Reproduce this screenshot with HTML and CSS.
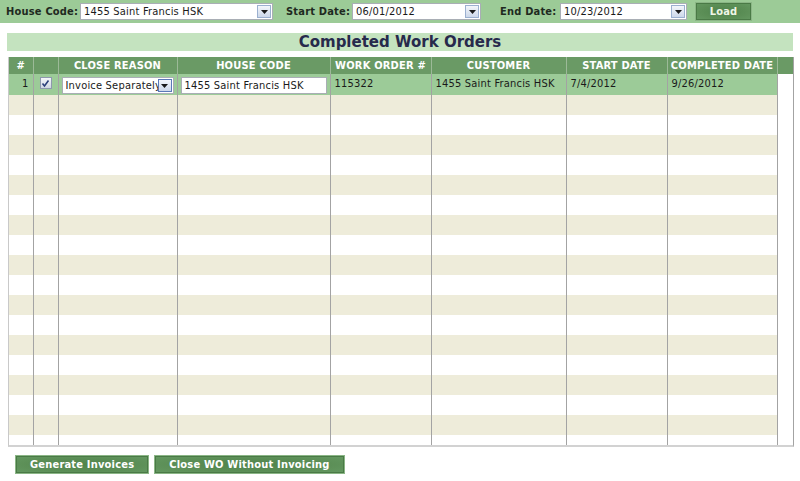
FILE: index.html
```html
<!DOCTYPE html>
<html>
<head>
<meta charset="utf-8">
<link rel="stylesheet" href="styles.css">
</head>
<body>
<div class="toolbar">
  <span class="lbl lbl-house">House Code:</span>
  <div class="combo combo-house"><span class="val">1455 Saint Francis HSK</span><span class="arrow"><svg width="7" height="4" viewBox="0 0 7 4"><path d="M0 0H7L3.5 4Z" fill="#1a1a1a"/></svg></span></div>
  <span class="lbl lbl-start">Start Date:</span>
  <div class="combo combo-date"><span class="val">06/01/2012</span><span class="arrow"><svg width="7" height="4" viewBox="0 0 7 4"><path d="M0 0H7L3.5 4Z" fill="#1a1a1a"/></svg></span></div>
  <span class="lbl lbl-end">End Date:</span>
  <div class="combo combo-date2"><span class="val">10/23/2012</span><span class="arrow"><svg width="7" height="4" viewBox="0 0 7 4"><path d="M0 0H7L3.5 4Z" fill="#1a1a1a"/></svg></span></div>
  <button class="btn btn-load">Load</button>
</div>

<div class="title">Completed Work Orders</div>

<div class="grid">
  <table>
    <colgroup>
      <col class="c-num"><col class="c-chk"><col class="c-reason"><col class="c-house"><col class="c-wo"><col class="c-cust"><col class="c-start"><col class="c-comp"><col class="c-extra">
    </colgroup>
    <thead>
      <tr>
        <th>#</th><th></th><th>CLOSE REASON</th><th>HOUSE CODE</th><th>WORK ORDER #</th><th>CUSTOMER</th><th>START DATE</th><th>COMPLETED DATE</th><th></th>
      </tr>
    </thead>
    <tbody>
      <tr class="sel">
        <td class="num">1</td>
        <td class="chkcell"><span class="chk"><svg width="9" height="9" viewBox="0 0 9 9"><path d="M1.5 4.5L3.5 7L7.5 1.5" fill="none" stroke="#2a3f7a" stroke-width="1.6"/></svg></span></td>
        <td class="ctl"><div class="combo combo-reason"><span class="val">Invoice Separately</span><span class="arrow arrow-focus"><svg width="7" height="4" viewBox="0 0 7 4"><path d="M0 0H7L3.5 4Z" fill="#1a1a1a"/></svg></span></div></td>
        <td class="ctl"><div class="textbox">1455 Saint Francis HSK</div></td>
        <td>115322</td>
        <td>1455 Saint Francis HSK</td>
        <td>7/4/2012</td>
        <td>9/26/2012</td>
        <td class="extra"></td>
      </tr>
      <tr class="alt"><td></td><td></td><td></td><td></td><td></td><td></td><td></td><td></td><td class="extra"></td></tr>
      <tr><td></td><td></td><td></td><td></td><td></td><td></td><td></td><td></td><td class="extra"></td></tr>
      <tr class="alt"><td></td><td></td><td></td><td></td><td></td><td></td><td></td><td></td><td class="extra"></td></tr>
      <tr><td></td><td></td><td></td><td></td><td></td><td></td><td></td><td></td><td class="extra"></td></tr>
      <tr class="alt"><td></td><td></td><td></td><td></td><td></td><td></td><td></td><td></td><td class="extra"></td></tr>
      <tr><td></td><td></td><td></td><td></td><td></td><td></td><td></td><td></td><td class="extra"></td></tr>
      <tr class="alt"><td></td><td></td><td></td><td></td><td></td><td></td><td></td><td></td><td class="extra"></td></tr>
      <tr><td></td><td></td><td></td><td></td><td></td><td></td><td></td><td></td><td class="extra"></td></tr>
      <tr class="alt"><td></td><td></td><td></td><td></td><td></td><td></td><td></td><td></td><td class="extra"></td></tr>
      <tr><td></td><td></td><td></td><td></td><td></td><td></td><td></td><td></td><td class="extra"></td></tr>
      <tr class="alt"><td></td><td></td><td></td><td></td><td></td><td></td><td></td><td></td><td class="extra"></td></tr>
      <tr><td></td><td></td><td></td><td></td><td></td><td></td><td></td><td></td><td class="extra"></td></tr>
      <tr class="alt"><td></td><td></td><td></td><td></td><td></td><td></td><td></td><td></td><td class="extra"></td></tr>
      <tr><td></td><td></td><td></td><td></td><td></td><td></td><td></td><td></td><td class="extra"></td></tr>
      <tr class="alt"><td></td><td></td><td></td><td></td><td></td><td></td><td></td><td></td><td class="extra"></td></tr>
      <tr><td></td><td></td><td></td><td></td><td></td><td></td><td></td><td></td><td class="extra"></td></tr>
      <tr class="alt"><td></td><td></td><td></td><td></td><td></td><td></td><td></td><td></td><td class="extra"></td></tr>
      <tr><td></td><td></td><td></td><td></td><td></td><td></td><td></td><td></td><td class="extra"></td></tr>
      <tr class="alt"><td></td><td></td><td></td><td></td><td></td><td></td><td></td><td></td><td class="extra"></td></tr>
    </tbody>
  </table>
</div>

<div class="actions">
  <button class="btn">Generate Invoices</button>
  <button class="btn">Close WO Without Invoicing</button>
</div>
</body>
</html>
```

FILE: styles.css
```css
* { box-sizing: border-box; }
body {
  margin: 0;
  background: #fff;
  font-family: "DejaVu Sans Condensed", "DejaVu Sans", Verdana, sans-serif;
  font-size: 11px;
  letter-spacing: 0.2px;
  color: #1a1a1a;
}
.toolbar {
  background: #9ccb97;
  height: 23px;
  display: flex;
  align-items: center;
  padding-left: 6px;
}
.lbl {
  font-weight: bold;
  color: #1f2a1f;
  white-space: nowrap;
  flex: none;
}
.lbl-house { width: 74px; }
.lbl-start { width: 66px; margin-left: 13px; }
.lbl-end { width: 60px; margin-left: 19px; }
.combo {
  display: flex;
  align-items: center;
  background: #fff;
  border: 1px solid #a9aeb5;
  height: 17px;
  padding-left: 3px;
  padding-right: 1px;
  flex: none;
}
.combo .val {
  flex: 1;
  white-space: nowrap;
  overflow: hidden;
}
.combo-house { width: 193px; }
.combo-date { width: 129px; }
.combo-date2 { width: 127px; }
.arrow {
  width: 14px;
  height: 13px;
  border: 1px solid #9bb0d0;
  background: linear-gradient(#f3f6fb, #cdd8ea);
  display: flex;
  align-items: center;
  justify-content: center;
  flex: none;
}
.arrow-focus { border-color: #5a78b8; }
.btn {
  font-family: "DejaVu Sans Condensed", "DejaVu Sans", Verdana, sans-serif;
  font-size: 11px;
  font-weight: bold;
  letter-spacing: 0.2px;
  color: #fff;
  background: radial-gradient(ellipse at center, #4f834b 0%, #5c8f57 60%, #659962 100%);
  border: 1px solid #8bb686;
  box-shadow: inset 0 0 0 1px #4a7a46;
  height: 19px;
  padding: 0 14px;
  cursor: pointer;
}
.btn-load {
  margin-left: 8px;
  width: 57px;
  padding: 0;
  color: #eef6e6;
}
.title {
  margin: 10px 7px 0 7px;
  height: 18px;
  background: #c4e3bf;
  text-align: center;
  font-family: "DejaVu Sans", Verdana, sans-serif;
  font-size: 15px;
  font-weight: bold;
  letter-spacing: 0;
  line-height: 18px;
  color: #272a4c;
}
.grid {
  margin: 6px 0 0 8px;
  width: 786px;
  height: 390px;
  overflow: hidden;
  border-left: 1px solid #c9c9c9;
  border-right: 1px solid #a3a3a3;
  border-bottom: 2px solid #d2d2d2;
}
table {
  border-collapse: collapse;
  table-layout: fixed;
  width: 784px;
}
.c-num { width: 24px; }
.c-chk { width: 25px; }
.c-reason { width: 119px; }
.c-house { width: 153px; }
.c-wo { width: 101px; }
.c-cust { width: 135px; }
.c-start { width: 101px; }
.c-comp { width: 110px; }
.c-extra { width: 16px; }
th {
  background: #6a9a65;
  color: #fff;
  font-weight: bold;
  font-size: 11px;
  height: 17px;
  padding: 0;
  border-left: 1px solid #9cba98;
  white-space: nowrap;
  overflow: hidden;
}
th:first-child { border-left: none; }
td {
  height: 20px;
  padding: 2px 4px 0 4px;
  vertical-align: top;
  border-left: 1px solid #a3a3a3;
  white-space: nowrap;
  overflow: hidden;
}
tbody td:first-child { border-left: none; }
tr.alt td { background: #eeecda; }
tr.sel td { background: #9ccb98; height: 21px; padding-top: 3px; }
tr td.extra { background: #fff; }
td.num { text-align: right; padding-right: 4px; }
td.chkcell { padding: 5px 0 0 6px; }
.chk {
  display: flex;
  align-items: center;
  justify-content: center;
  width: 12px;
  height: 12px;
  border: 1px solid #8e99ad;
  background: linear-gradient(#f4f6fa, #cfd6e2);
}
td.ctl { padding: 2px 3px 0 3px; }
.combo-reason { width: 112px; height: 17px; }
.textbox {
  width: 146px;
  height: 17px;
  border: 1px solid #a9aeb5;
  background: #fff;
  padding-left: 3px;
  line-height: 15px;
}
.actions {
  display: flex;
  gap: 5px;
  margin: 8px 0 0 15px;
}
.actions .btn { height: 19px; }
```
